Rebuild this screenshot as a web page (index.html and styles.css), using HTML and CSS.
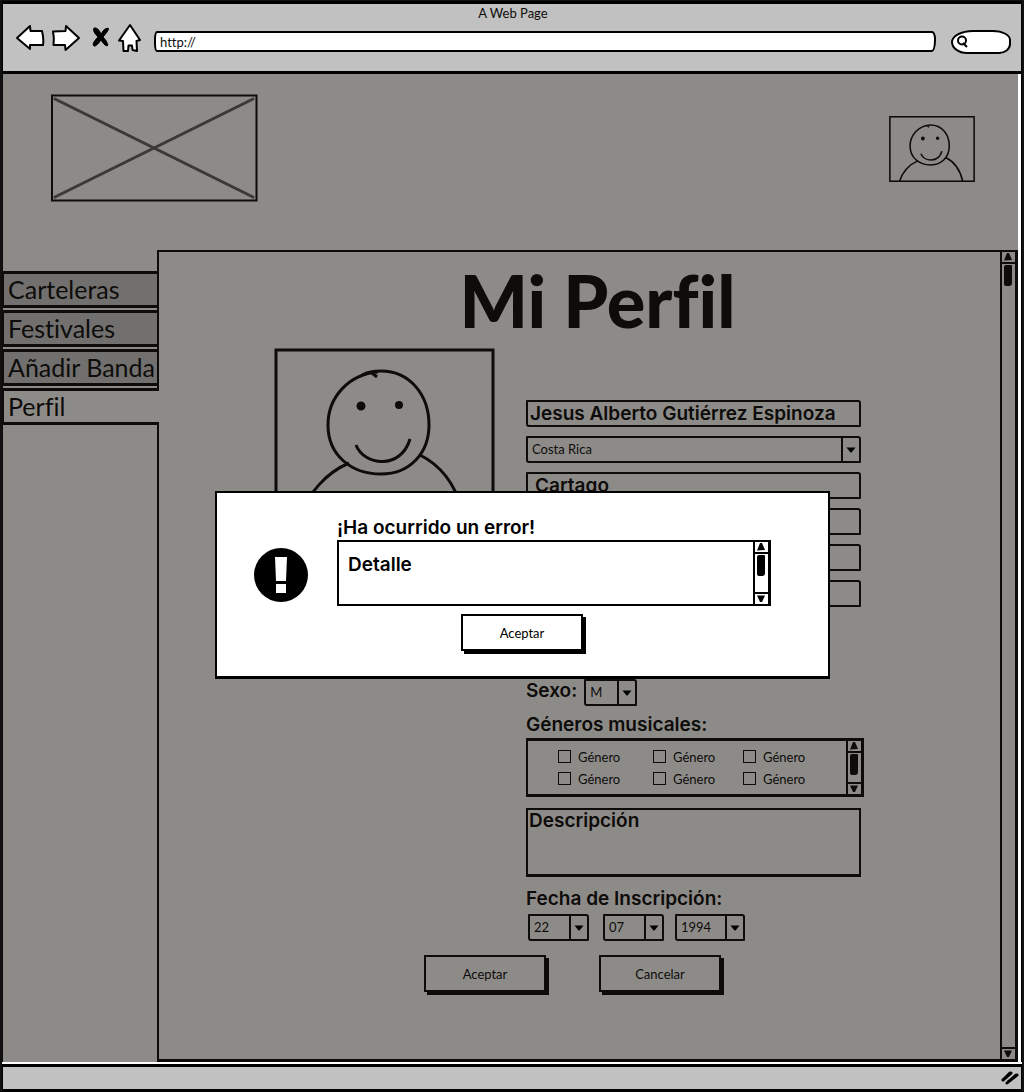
FILE: index.html
```html
<!DOCTYPE html>
<html lang="es">
<head>
<meta charset="utf-8">
<meta name="viewport" content="width=device-width, initial-scale=1">
<title>A Web Page</title>
<link rel="stylesheet" href="styles.css">
</head>
<body>
<svg width="0" height="0" class="defs" aria-hidden="true">
  <symbol id="up" viewBox="0 0 12 10"><path d="M5 1 L7 1 L10 8 L2 8.500Z"/></symbol>
  <symbol id="down" viewBox="0 0 12 10"><path d="M2 1.500 L10 1.500 L7 8 L5 8Z"/></symbol>
  <symbol id="caret" viewBox="0 0 10 8"><path d="M.5 1.500 H9.500 L5.500 6.500 H4.500Z"/></symbol>
  <symbol id="face" viewBox="0 0 221 170">
    <path d="M104 24 C76 26 54 48 54 77 C54 107 77 126 107 126 C136 126 155 105 155 77 C155 46 135 23 107 23 C100 23 94 24 88 27 M98 25 L103 29"/>
    <path d="M82 97 C90 118 127 122 136 91"/>
    <path d="M75 115 C52 125 34 145 26 170 M146 107 C170 119 184 141 190 170"/>
    <circle class="eye" cx="87" cy="58" r="3"/><circle class="eye" cx="125" cy="57" r="2.500"/>
  </symbol>
</svg>

<div class="window">
  <header class="chrome">
    <div class="chrome-title">A Web Page</div>
    <div class="toolbar">
      <nav class="nav-buttons" aria-label="Navegador">
        <button type="button" aria-label="Atrás"><svg width="30" height="30" viewBox="0 0 30 30"><path d="M2 15 L15 3 L15.500 8 L27 8 Q29 16 28 22 L15 22 L15 26Z"/></svg></button>
        <button type="button" aria-label="Adelante"><svg width="30" height="30" viewBox="0 0 30 30"><path d="M28 15 L15 3 L14.500 8 L2 8.500 Q3.500 15 2.500 22 L14 22 L14.500 27Z"/></svg></button>
        <button type="button" class="stop" aria-label="Detener"><svg width="20" height="30" viewBox="0 0 20 30"><path class="solid" d="M3 5 Q7 4 10 11 Q13 5 17 5 Q19 6 12 14 Q16 18 17 22 Q15 25 10 17 Q5 24 3 23 Q0 21 7 14 Q1 8 3 5Z"/></svg></button>
        <button type="button" aria-label="Inicio"><svg width="26" height="30" viewBox="0 0 26 30"><path d="M13 2 L23 17 L19.500 18 L20 28 L15.500 27 L15 22.500 L11.500 22.500 L11 28 L6.500 28 L6 18 L2 17.500Z"/></svg></button>
      </nav>
      <input class="address" type="text" value="http://" aria-label="Dirección">
      <label class="search">
        <svg width="12" height="14" viewBox="0 0 12 14"><circle cx="6" cy="5.500" r="4"/><path d="M7 8 L11 12"/></svg>
        <input type="text" aria-label="Buscar">
      </label>
    </div>
  </header>

  <main class="page">
    <div class="masthead">
      <svg class="logo" width="208" height="108" viewBox="0 0 208 108"><path class="cross" d="M5 5 L203 103 M203 5 L5 103"/><path d="M2 1.500 L206.500 1.500 L206.500 106.500 L2 106.500Z"/></svg>
      <svg class="avatar-small" width="86" height="66" viewBox="0 0 221 170" role="img" aria-label="Usuario"><rect x="2" y="2" width="217" height="166"/><use href="#face"/></svg>
    </div>

    <div class="workspace">
      <nav class="tabs" aria-label="Secciones">
        <a href="#carteleras">Carteleras</a>
        <a href="#festivales">Festivales</a>
        <a href="#banda">Añadir Banda</a>
        <a href="#perfil" class="active" aria-current="page">Perfil</a>
      </nav>

      <section class="panel">
        <div class="panel-body">
          <h1>Mi Perfil</h1>
          <div class="profile">
            <svg class="avatar" width="221" height="170" viewBox="0 0 221 170" role="img" aria-label="Foto de perfil"><rect x="2" y="2" width="217" height="166"/><use href="#face"/></svg>
            <form class="form" id="perfil">
              <input class="field" type="text" value="Jesus Alberto Gutiérrez Espinoza" aria-label="Nombre">
              <span class="select"><select aria-label="País"><option>Costa Rica</option></select><svg width="10" height="8"><use href="#caret"/></svg></span>
              <input class="field indent" type="text" value="Cartago" aria-label="Provincia">
              <input class="field" type="text" aria-label="Cantón">
              <input class="field" type="text" aria-label="Distrito">
              <input class="field" type="text" aria-label="Correo">
              <div class="sex">
                <label class="caption" for="sexo">Sexo:</label>
                <span class="select"><select id="sexo"><option>M</option></select><svg width="10" height="8"><use href="#caret"/></svg></span>
              </div>
              <div class="caption" id="generos">Géneros musicales:</div>
              <div class="genres" role="group" aria-labelledby="generos">
                <div class="genre-list">
                  <label><input type="checkbox">Género</label>
                  <label><input type="checkbox">Género</label>
                  <label><input type="checkbox">Género</label>
                  <label><input type="checkbox">Género</label>
                  <label><input type="checkbox">Género</label>
                  <label><input type="checkbox">Género</label>
                </div>
                <div class="scroll"><svg width="12" height="10"><use href="#up"/></svg><div class="track"><i></i></div><svg width="12" height="10"><use href="#down"/></svg></div>
              </div>
              <textarea class="description" aria-label="Descripción">Descripción</textarea>
              <div class="caption" id="fecha">Fecha de Inscripción:</div>
              <div class="date" role="group" aria-labelledby="fecha">
                <span class="select"><select aria-label="Día"><option>22</option></select><svg width="10" height="8"><use href="#caret"/></svg></span>
                <span class="select"><select aria-label="Mes"><option>07</option></select><svg width="10" height="8"><use href="#caret"/></svg></span>
                <span class="select year"><select aria-label="Año"><option>1994</option></select><svg width="10" height="8"><use href="#caret"/></svg></span>
              </div>
            </form>
          </div>
          <div class="actions">
            <button type="submit" form="perfil" class="button">Aceptar</button>
            <button type="button" class="button">Cancelar</button>
          </div>
        </div>
        <div class="scroll"><svg width="12" height="10"><use href="#up"/></svg><div class="track"><i></i></div><svg width="12" height="10"><use href="#down"/></svg></div>
      </section>
    </div>

    <div class="overlay">
      <div class="dialog" role="alertdialog" aria-labelledby="error-title">
        <svg class="alert" width="56" height="56" viewBox="0 0 56 56" aria-hidden="true"><circle cx="28" cy="28" r="27"/><path d="M22 10 H34 L33 34 H23Z M23 37 H33 V46 H23Z"/></svg>
        <div class="dialog-body">
          <h2 class="caption" id="error-title">¡Ha ocurrido un error!</h2>
          <div class="detail">
            <p class="caption">Detalle</p>
            <div class="scroll"><svg width="12" height="10"><use href="#up"/></svg><div class="track"><i></i></div><svg width="12" height="10"><use href="#down"/></svg></div>
          </div>
        </div>
        <button type="button" class="button">Aceptar</button>
      </div>
    </div>
  </main>

  <footer class="status"><svg width="18" height="16" viewBox="0 0 18 16"><path d="M3 9 L9 3 M6 13 L15 5 M2 10 L10 3 M7 12 L16 5"/></svg></footer>
</div>
</body>
</html>
```

FILE: styles.css
```css
:root {
  --ink: #0d0c0a;
  --dim: #8d8b88;
  --tab: #72706e;
  --bar: #c1c1c1;
}

* { box-sizing: border-box; }

body {
  margin: 0;
  background: #fff;
  color: var(--ink);
  font: 13px/18px Lato, "Open Sans", sans-serif;
  font-variant-ligatures: none;
}

button, input, select, textarea { font: inherit; color: inherit; }
svg { display: block; flex: none; }
.defs { position: absolute; }

.window {
  display: flex;
  flex-direction: column;
  min-height: 100vh;
  border: solid #111;
  border-width: 1px 2px 0;
}

/* browser frame */
.chrome {
  border: solid #000;
  border-width: 3px 1px;
  background: var(--bar);
  padding: 0 10px 18px 12px;
}
.chrome-title { text-align: center; }
.toolbar { display: flex; align-items: center; height: 31px; }
.nav-buttons { display: flex; gap: 6px; margin-right: 11px; }
.nav-buttons button { padding: 0; border: 0; background: none; }
.nav-buttons svg { fill: #fff; stroke: #000; stroke-width: 2; stroke-linejoin: round; }
.nav-buttons .stop { margin-left: 4px; }
.nav-buttons .solid { fill: #000; stroke-width: 1; }
.address {
  flex: 1;
  min-width: 0;
  height: 21px;
  margin-top: 8px;
  padding: 0 4px;
  border: 2px solid #000;
  border-radius: 3px 4px 4px 3px / 8px 8px 12px 8px;
  background: #fff;
}
.search {
  display: flex;
  align-items: center;
  width: 60px;
  height: 24px;
  margin: 8px 0 0 15px;
  padding: 3px;
  border: 2px solid #000;
  border-radius: 22px 18px 12px 16px / 12px 10px 10px 12px;
  background: #fff;
}
.search svg { fill: none; stroke: #000; stroke-width: 2; }
.search input { width: 100%; min-width: 0; border: 0; padding: 0; background: none; }

/* page area */
.page {
  position: relative;
  flex: 1;
  display: flex;
  flex-direction: column;
  margin-right: 4px;
  border-left: 1px solid var(--ink);
  background: var(--dim);
  box-shadow: 3px 0 #fff, 4px 0 #000;
}
.masthead {
  display: flex;
  justify-content: space-between;
  align-items: flex-start;
  height: 176px;
  padding: 20px 43px 0 47px;
}
.logo { fill: none; stroke: var(--ink); stroke-width: 2; }
.logo .cross { stroke: #3a3938; stroke-width: 3; stroke-linecap: round; }
.avatar-small { margin-top: 22px; fill: none; stroke: var(--ink); stroke-width: 4; }
.eye { fill: var(--ink); }

.workspace { flex: 1; display: flex; }
.tabs {
  display: flex;
  flex-direction: column;
  gap: 2px;
  width: 154px;
  padding-top: 21px;
}
.tabs a {
  height: 37px;
  padding: 0 4px;
  border: 3px solid var(--ink);
  border-width: 3px 0 3px 1px;
  background: var(--tab);
  color: inherit;
  font-size: 25px;
  line-height: 31px;
  text-decoration: none;
  white-space: nowrap;
}
.tabs .active {
  position: relative;
  margin-right: -2px;
  background: var(--dim);
}
.panel {
  flex: 1;
  display: flex;
  min-width: 0;
  border: 2px solid var(--ink);
  border-right-width: 3px;
  border-bottom-width: 3px;
}
.panel-body { flex: 1; min-width: 0; padding: 12px 0 66px; }
h1 {
  margin: 0 0 12px 36px;
  font-size: 72px;
  font-weight: 900;
  line-height: 72px;
  text-align: center;
}
.profile {
  display: flex;
  justify-content: center;
  gap: 31px;
  margin-right: 24px;
}
.avatar { fill: none; stroke: var(--ink); stroke-width: 3; }
.avatar .eye, .avatar-small .eye { stroke-width: 4; }
.form { width: 335px; padding-top: 52px; }

.caption, .field, .description {
  font-family: Inter, Lato, sans-serif;
  font-size: 19px;
  font-weight: 600;
}
.caption {
  margin: 0;
  line-height: 24px;
}
.field {
  display: block;
  width: 100%;
  height: 27px;
  margin: 0 0 9px;
  padding: 0 2px;
  border: 2px solid var(--ink);
  border-radius: 1px 3px;
  background: none;
}
.indent { padding-left: 7px; }
.select {
  display: flex;
  position: relative;
  height: 27px;
  border: 2px solid var(--ink);
  border-radius: 1px 3px;
}
.select select {
  flex: 1;
  min-width: 0;
  padding: 0 4px 2px;
  border: 0;
  background: none;
  appearance: none;
}
.select svg {
  width: 18px;
  height: 23px;
  padding: 8px 3px 7px;
  border-left: 2px solid var(--ink);
  pointer-events: none;
}
.form > .select { margin-bottom: 9px; }
.sex { display: flex; gap: 7px; margin: 72px 0 7px; }
.sex .select { width: 53px; }
.genres {
  display: flex;
  height: 59px;
  margin: 1px -3px 11px 0;
  border: 2px solid var(--ink);
  border-width: 3px 3px 3px 2px;
}
.genre-list {
  flex: 1;
  display: grid;
  grid-template-columns: 95px 90px auto;
  grid-auto-rows: 22px;
  align-content: center;
  padding-left: 30px;
}
.genre-list label { display: flex; align-items: center; gap: 7px; }
.genre-list input {
  width: 13px;
  height: 13px;
  margin: 0;
  border: 1px solid var(--ink);
  appearance: none;
}
.description {
  display: block;
  width: 100%;
  height: 69px;
  margin-bottom: 10px;
  padding: 0 1px;
  border: 2px solid var(--ink);
  border-bottom-width: 3px;
  background: none;
  line-height: 22px;
  resize: none;
}
.date { display: flex; gap: 14px; margin: 3px 0 0 2px; }
.date .select { width: 61px; }
.date .year { width: 70px; margin-left: -3px; }

.actions { display: flex; justify-content: center; gap: 53px; margin: 14px 14px 0 0; }
.button {
  width: 122px;
  height: 37px;
  padding: 0;
  border: 2px solid currentColor;
  border-radius: 0;
  background: none;
  box-shadow: 3px 3px currentColor;
}

/* scroll bars */
.scroll {
  display: flex;
  flex-direction: column;
  width: 15px;
  border-left: 2px solid currentColor;
}
.scroll svg { width: 12px; height: 10px; fill: currentColor; }
.track {
  flex: 1;
  border: solid currentColor;
  border-width: 2px 0;
}
.track i {
  display: block;
  width: 8px;
  height: 21px;
  margin: 1px 0 0 2px;
  border-radius: 2px 1px 3px 2px;
  background: currentColor;
}

/* error dialog */
.overlay {
  position: absolute;
  inset: 0;
  display: flex;
  justify-content: center;
  align-items: flex-start;
  padding: 417px 0 0 24px;
}
.dialog {
  display: grid;
  grid-template-columns: 56px 434px;
  column-gap: 28px;
  row-gap: 8px;
  padding: 23px 57px 22px 36px;
  border: 2px solid #000;
  border-bottom-width: 3px;
  background: #fff;
  color: #000;
}
.alert { align-self: center; margin-top: 27px; }
.alert path { fill: #fff; }
.detail {
  display: flex;
  justify-content: space-between;
  height: 66px;
  border: 2px solid #000;
  border-right-width: 3px;
}
.detail p { padding: 11px 9px; }
.dialog > .button { grid-column: 1 / -1; justify-self: center; margin: 0 0 3px 20px; }

.status {
  display: flex;
  justify-content: flex-end;
  align-items: center;
  height: 28px;
  margin-top: 2px;
  padding-right: 2px;
  border: solid #000;
  border-width: 3px 1px;
  background: var(--bar);
}
.status svg { fill: none; stroke: #000; stroke-width: 3; stroke-linecap: round; }
```
